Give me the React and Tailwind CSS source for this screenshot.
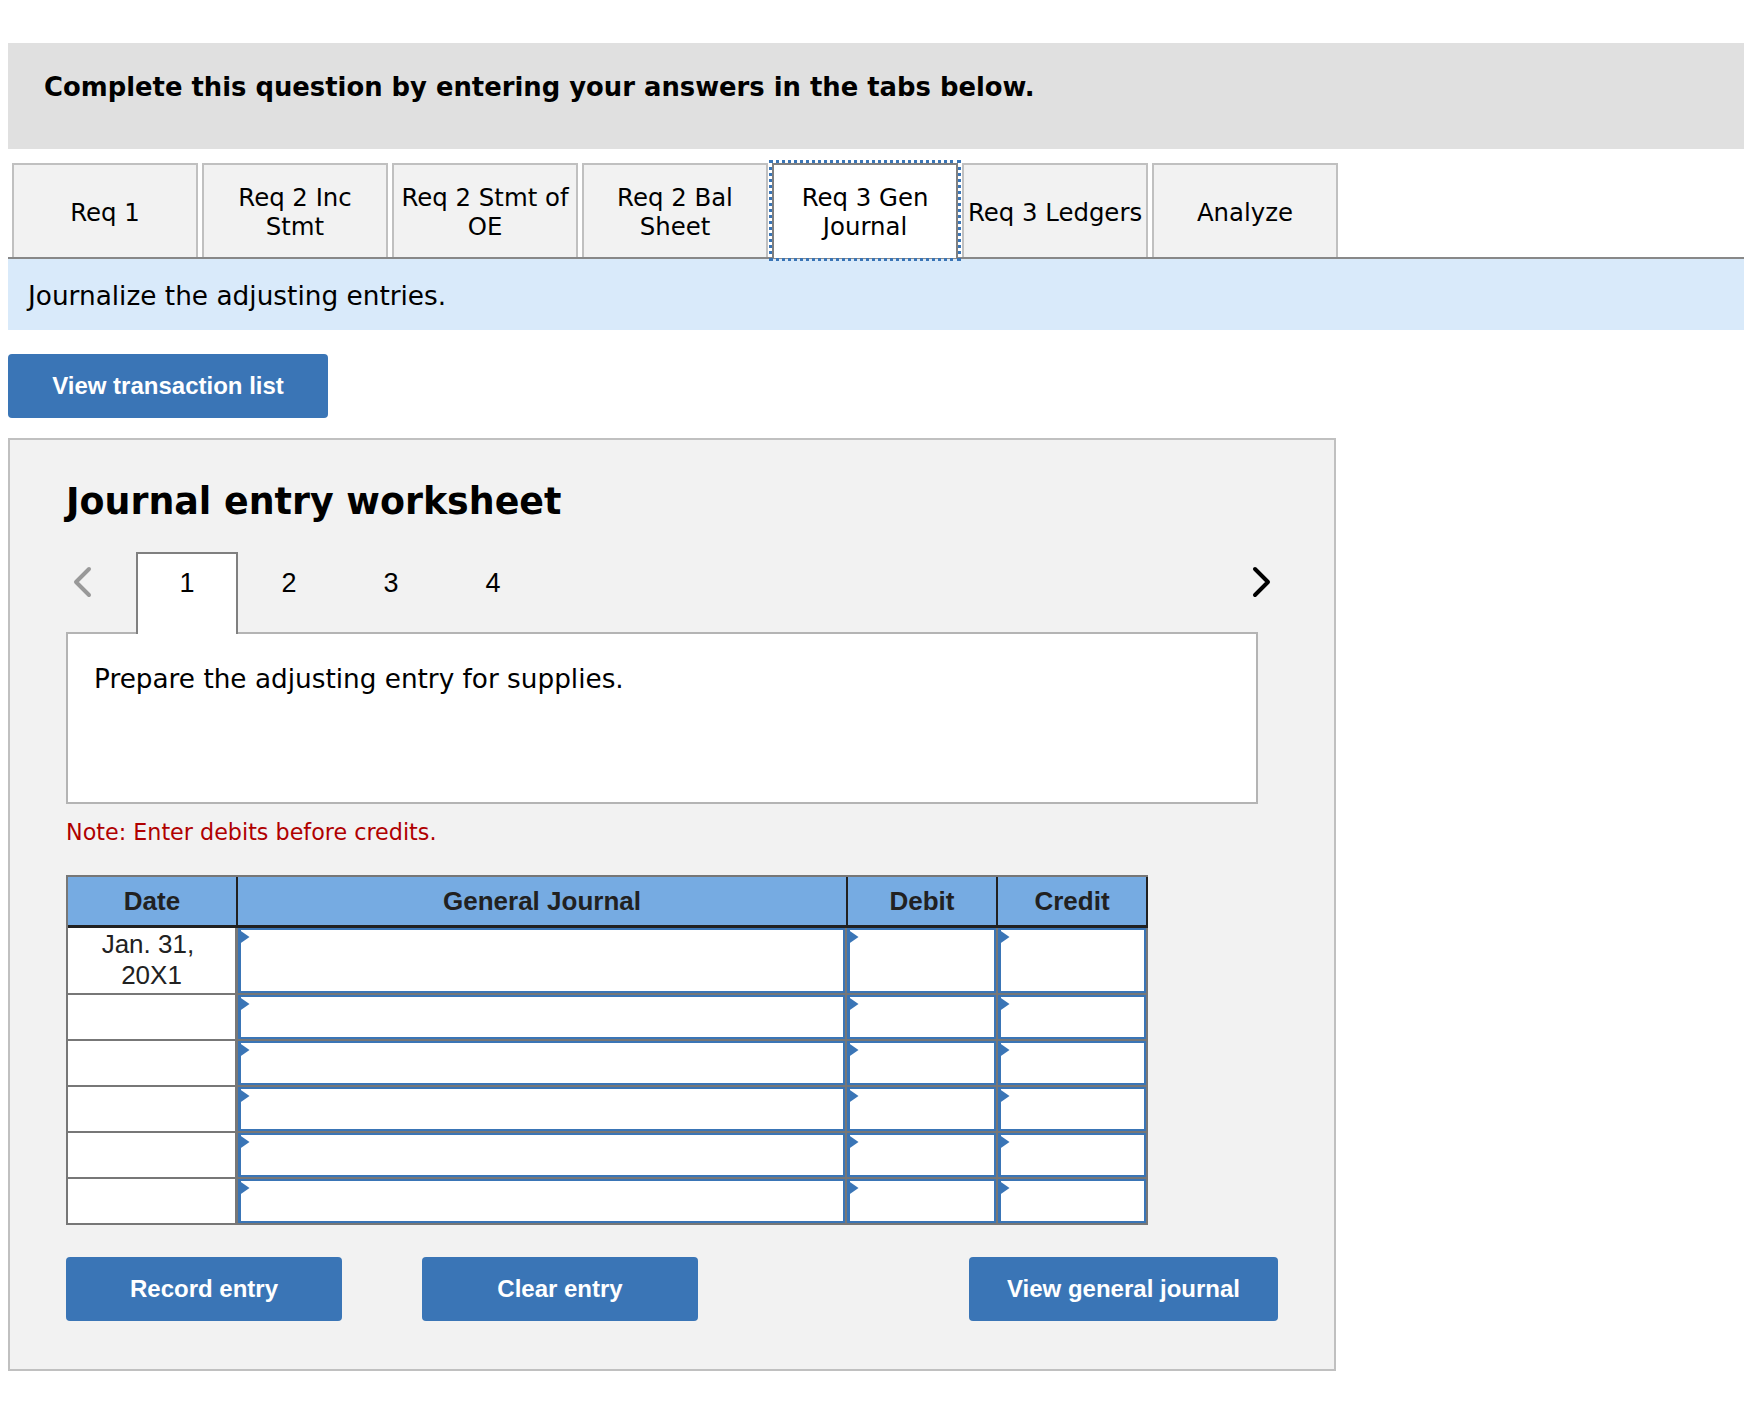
const verdana = 'font-["DejaVu_Sans",Verdana,sans-serif]';
const arial = 'font-["Liberation_Sans",Arial,sans-serif]';

const tabs = [
  { label: 'Req 1' },
  { label: 'Req 2 Inc Stmt' },
  { label: 'Req 2 Stmt of OE' },
  { label: 'Req 2 Bal Sheet' },
  { label: 'Req 3 Gen Journal', active: true },
  { label: 'Req 3 Ledgers' },
  { label: 'Analyze' },
];

const rows = [
  { date: 'Jan. 31,\u00a0 20X1', height: 'h-[67px]' },
  { date: '', height: 'h-[46px]' },
  { date: '', height: 'h-[46px]' },
  { date: '', height: 'h-[46px]' },
  { date: '', height: 'h-[46px]' },
  { date: '', height: 'h-[46px]' },
];

function BlueButton({ children, className = '' }) {
  return (
    <button
      type="button"
      className={`h-16 rounded bg-[#3a75b6] text-[24px] font-bold text-white ${arial} ${className}`}
    >
      {children}
    </button>
  );
}

function InputCell() {
  return (
    <div className="relative border-b-2 border-r-2 border-[#777777]">
      <div className="h-full w-full border-2 border-l-[3px] border-[#3a75b6] bg-white" />
      <svg className="absolute left-0 top-[1px]" width="12" height="16" viewBox="0 0 12 16">
        <path d="M0 0 L11.5 8 L0 16 Z" fill="#3a75b6" />
      </svg>
    </div>
  );
}

function JournalTable() {
  return (
    <div className={`mt-[31px] w-[1082px] border-l-2 border-t-2 border-[#777777] ${arial} text-[#212121]`}>
      <div className="grid h-[51px] grid-cols-[170px_610px_150px_150px] bg-[#76abe2] text-[26px] font-bold">
        <div className="flex items-center justify-center border-b-[3px] border-r-2 border-[#212121]">Date</div>
        <div className="flex items-center justify-center border-b-[3px] border-r-2 border-[#212121]">General Journal</div>
        <div className="flex items-center justify-center border-b-[3px] border-r-2 border-[#212121]">Debit</div>
        <div className="flex items-center justify-center border-b-[3px] border-r-2 border-[#212121]">Credit</div>
      </div>
      {rows.map((row, i) => (
        <div key={i} className={`grid grid-cols-[170px_609px_151px_150px] ${row.height}`}>
          <div className="flex items-center justify-center border-b-2 border-r-[3px] border-[#777777] bg-white px-6 pb-[2px] text-center text-[26px] leading-[31px]">
            {row.date}
          </div>
          <InputCell />
          <InputCell />
          <InputCell />
        </div>
      ))}
    </div>
  );
}

export default function App() {
  return (
    <div className={`min-h-[1406px] bg-white pl-2 pt-[43px] text-black ${verdana}`}>
      <div className="h-[106px] bg-[#e0e0e0] pl-[36px] pt-[29px] text-[25.85px] font-bold leading-[30px]">
        Complete this question by entering your answers in the tabs below.
      </div>

      <div className="mt-[14px] flex h-[96px] gap-1 border-b-2 border-[#888888] pl-1">
        {tabs.map((tab) => (
          <div
            key={tab.label}
            className={
              tab.active
                ? 'relative z-10 flex h-[95px] w-[186px] items-center justify-center border-2 border-b-0 border-[#808080] bg-white px-[3px] pt-[1px] text-center text-[24.4px] leading-[29px] outline-3 outline-dotted outline-[#3a75b6]'
                : 'flex h-[94px] w-[186px] items-center justify-center border-2 border-b-0 border-[#c0c0c0] bg-[#f2f2f2] px-[3px] pt-[2px] text-center text-[24.4px] leading-[29px]'
            }
          >
            {tab.label}
          </div>
        ))}
      </div>

      <div className="flex h-[71px] items-center bg-[#d9eafa] pl-5 pt-1 text-[26.35px]">
        Journalize the adjusting entries.
      </div>

      <BlueButton className="mt-6 block w-80">View transaction list</BlueButton>

      <div className="mt-5 h-[933px] w-[1328px] border-2 border-[#c0c0c0] bg-[#f2f2f2] pl-[56px] pt-[42px]">
        <h2 className="text-[36.4px] font-bold leading-10">Journal entry worksheet</h2>

        <div className="mt-[30px] flex h-[80px] w-[1207px] items-start">
          <svg className="ml-[5px] mt-[14px]" width="22" height="32" viewBox="0 0 22 32" fill="none">
            <path d="M18 3 L5 16 L18 29" stroke="#999999" strokeWidth="4" strokeLinecap="round" strokeLinejoin="round" />
          </svg>
          <div className={`ml-[43px] flex ${arial} text-[27px]`}>
            {[1, 2, 3, 4].map((n) => (
              <div
                key={n}
                className={
                  n === 1
                    ? 'relative z-10 flex h-[82px] w-[102px] justify-center border-2 border-b-0 border-[#808080] bg-white pt-[9px]'
                    : 'flex h-[80px] w-[102px] justify-center pt-[11px]'
                }
              >
                {n}
              </div>
            ))}
          </div>
          <svg className="ml-auto mt-[14px]" width="22" height="32" viewBox="0 0 22 32" fill="none">
            <path d="M4 3 L17 16 L4 29" stroke="#000000" strokeWidth="4" strokeLinecap="round" strokeLinejoin="round" />
          </svg>
        </div>

        <div className="h-[172px] w-[1192px] border-2 border-[#b4b4b4] bg-white pl-[26px] pt-[31px] text-[26.3px] leading-7">
          Prepare the adjusting entry for supplies.
        </div>

        <p className="mt-[16px] text-[22.26px] leading-6 text-[#b00000]">Note: Enter debits before credits.</p>

        <JournalTable />

        <div className="mt-[32px] flex w-[1212px] gap-20">
          <BlueButton className="w-[276px]">Record entry</BlueButton>
          <BlueButton className="w-[276px]">Clear entry</BlueButton>
          <BlueButton className="ml-auto w-[309px]">View general journal</BlueButton>
        </div>
      </div>
    </div>
  );
}
